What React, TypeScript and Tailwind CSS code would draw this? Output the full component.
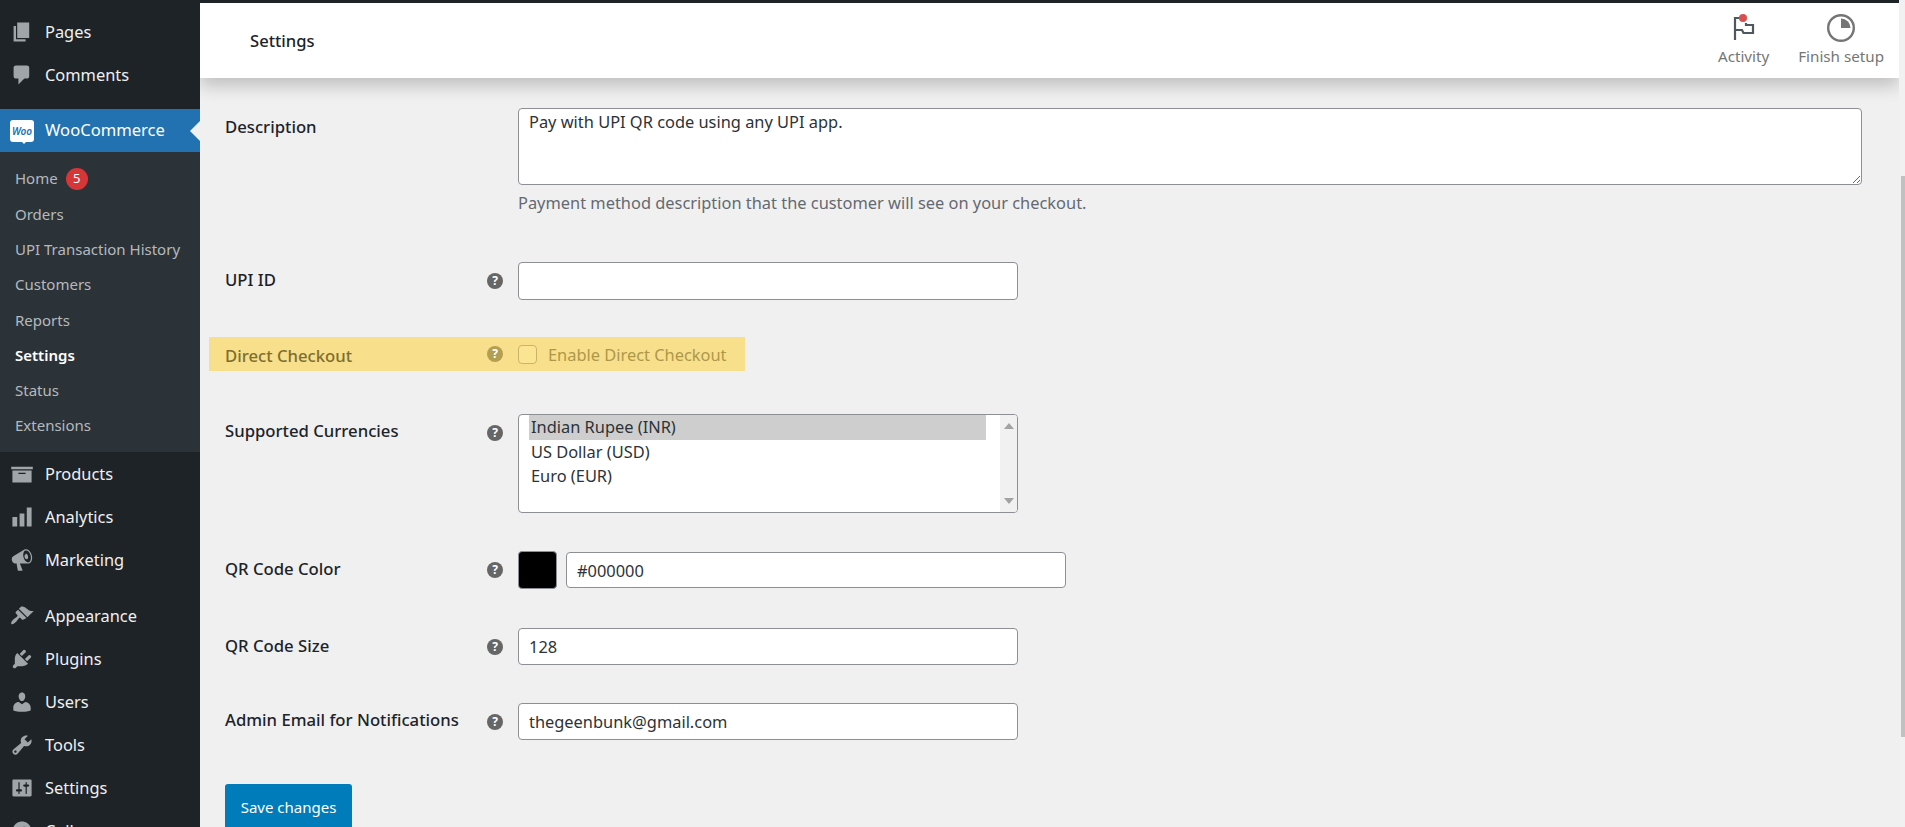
import type { ReactNode } from "react";

const font = { fontFamily: '"Noto Sans", sans-serif' };

const icons: Record<string, ReactNode> = {
    pages: <path d="M6 15V2h10v13H6zm-1 1h8v2H3V5h2v11z" />,
    comments: <path d="M5 2h9q.82 0 1.41.59T16 4v7q0 .82-.59 1.41T14 13h-2l-5 5v-5H5q-.82 0-1.41-.59T3 11V4q0-.82.59-1.41T5 2z" />,
    products: <path d="M19 4v2H1V4h18zM2 7h16v10H2V7zm11 3V9H7v1h6z" />,
    analytics: <path d="M18 18V2h-4v16h4zm-6 0V7H8v11h4zm-6 0v-8H2v8h4z" />,
    marketing: <path d="M18.15 5.94c.46 1.62.38 3.22-.02 4.48-.42 1.28-1.26 2.18-2.3 2.48-.16.06-.26.06-.4.06-.06.02-.12.02-.18.02-.06.02-.14.02-.22.02h-6.8l2.22 5.5c.02.14-.06.26-.14.34-.08.1-.24.16-.34.16H6.95c-.1 0-.26-.06-.34-.16-.08-.08-.16-.2-.14-.34l-1-5.5H4.25l-.02-.02c-.5.06-1.08-.18-1.54-.62s-.88-1.08-1.06-1.88c-.24-.8-.2-1.56-.02-2.2.18-.62.58-1.08 1.06-1.3l.02-.02 9-5.4c.1-.06.18-.1.24-.16.06-.04.14-.08.24-.12.16-.08.28-.12.5-.18 1.04-.3 2.24.1 3.22 1 .98.88 1.8 2.24 2.26 3.86zm-2.58 5.98h-.02c.4-.1.74-.34 1.04-.7.58-.7.86-1.76.86-3.04 0-.64-.1-1.3-.28-1.98-.34-1.36-1.02-2.5-1.78-3.24s-1.68-1.1-2.46-.88c-.82.22-1.4.96-1.7 2-.32 1.04-.28 2.36.06 3.72.38 1.36 1 2.5 1.8 3.24.78.74 1.62 1.1 2.48.88zm-2.54-7.08c.22-.04.42-.02.62.04.38.16.76.48 1.02 1s.42 1.2.42 1.78c0 .3-.04.56-.12.8-.18.48-.44.84-.86.94-.34.1-.8-.06-1.14-.36s-.64-.8-.78-1.38c-.16-.56-.14-1.14 0-1.58.16-.44.42-.76.84-.88z" />,
    appearance: <path d="M14.48 11.06L7.41 3.99l1.5-1.5c.5-.56 2.3-.47 3.51.32 1.21.8 1.43 1.28 2.91 2.1 1.18.64 2.45 1.26 4.45.85zm-.71.71L6.7 4.7 4.93 6.47c-.39.39-.39 1.02 0 1.41l1.06 1.06c.39.39.39 1.03 0 1.42-.6.6-1.43 1.11-2.21 1.69-.35.26-.7.53-1.01.84-1.34 1.34-2.37 2.95-1.58 3.73.79.79 2.39-.24 3.73-1.59.31-.31.58-.66.84-1.01.58-.78 1.09-1.61 1.69-2.21.39-.39 1.02-.39 1.41 0l1.06 1.06c.39.39 1.02.39 1.41 0z" />,
    plugins: <path d="M13.11 4.36L9.87 7.6 8 5.73l3.24-3.24c.35-.34 1.05-.2 1.56.32.52.51.66 1.21.31 1.55zm-8 1.77l.91-1.12 9.01 9.01-1.19.84c-.71.71-2.63 1.16-3.82 1.16H6.14L4.9 17.26c-.59.59-1.54.59-2.12 0-.59-.58-.59-1.53 0-2.12l1.24-1.24v-3.88c0-1.13.4-3.19 1.09-3.89zm7.26 3.97l3.24-3.24c.34-.35 1.04-.21 1.55.31.52.51.66 1.21.31 1.55l-3.24 3.25z" />,
    users: <path d="M10 9.25c-2.27 0-2.73-3.44-2.73-3.44C7 4.02 7.82 2 9.97 2c2.16 0 2.98 2.02 2.71 3.81 0 0-.41 3.44-2.68 3.44zm0 2.57L12.72 10c2.39 0 4.52 2.33 4.52 4.53v2.49s-3.65 1.13-7.24 1.13c-3.65 0-7.24-1.13-7.24-1.13v-2.49c0-2.25 1.94-4.48 4.47-4.48z" />,
    tools: <path d="M16.68 9.77c-1.34 1.34-3.3 1.67-4.95.99l-5.41 6.52c-.99.99-2.59.99-3.58 0s-.99-2.59 0-3.57l6.52-5.42c-.68-1.65-.35-3.61.99-4.95 1.28-1.28 3.12-1.62 4.72-1.06l-2.89 2.89 2.82 2.82 2.86-2.87c.53 1.58.18 3.39-1.08 4.65zM3.81 16.21c.4.39 1.04.39 1.43 0 .4-.4.4-1.04 0-1.43-.39-.4-1.03-.4-1.43 0-.39.39-.39 1.03 0 1.43z" />,
    settings: <path d="M18 16V4c0-.55-.45-1-1-1H3c-.55 0-1 .45-1 1v12c0 .55.45 1 1 1h14c.55 0 1-.45 1-1zM8 11h1c.55 0 1 .45 1 1s-.45 1-1 1H8v1.5c0 .28-.22.5-.5.5s-.5-.22-.5-.5V13H6c-.55 0-1-.45-1-1s.45-1 1-1h1V5.5c0-.28.22-.5.5-.5s.5.22.5.5V11zm5-2h-1c-.55 0-1-.45-1-1s.45-1 1-1h1V5.5c0-.28.22-.5.5-.5s.5.22.5.5V7h1c.55 0 1 .45 1 1s-.45 1-1 1h-1v5.5c0 .28-.22.5-.5.5s-.5-.22-.5-.5V9z" />,
    collapse: <path d="M10 2.16c4.33 0 7.84 3.51 7.84 7.84s-3.51 7.84-7.84 7.84S2.16 14.33 2.16 10 5.71 2.16 10 2.16zm2 11.72V6.12L6.18 9.97z" />,
};

const MenuItem = ({ icon, label }: { icon: string; label: string }) => (
    <div className="flex items-center h-[43px] text-[16.4px] text-[#f0f0f1]">
        <svg viewBox="0 0 20 20" className="w-[24px] h-[24px] ml-[10px] mr-[11px] shrink-0 fill-[#a0a5aa]">{icons[icon]}</svg>
        <span>{label}</span>
    </div>
);

const SubItem = ({ label, active, badge }: { label: string; active?: boolean; badge?: string }) => (
    <div className={`flex items-center h-[35.3px] pl-[15px] text-[15px] ${active ? "text-white font-semibold" : "text-[#b4b9be]"}`}>
        <span>{label}</span>
        {badge && (
            <span className="ml-[8px] flex items-center justify-center w-[22px] h-[22px] rounded-full bg-[#d63638] text-white text-[13px]">{badge}</span>
        )}
    </div>
);

const Sidebar = () => (
    <aside className="w-[200px] h-[827px] shrink-0 bg-[#1d2327] overflow-hidden pt-[10.5px]">
        <MenuItem icon="pages" label="Pages" />
        <MenuItem icon="comments" label="Comments" />
        <div className="relative flex items-center h-[43px] mt-[12.5px] bg-[#2271b1] text-[16.6px] text-white">
            <div className="relative w-[24px] h-[22px] ml-[10px] mr-[11px] rounded-[3px] bg-white flex items-center justify-center">
                <span className="text-[10px] font-semibold italic leading-none text-[#2271b1]">Woo</span>
                <span className="absolute left-[11px] top-[21px] w-0 h-0 border-x-[3px] border-t-[3px] border-x-transparent border-t-white" />
            </div>
            <span>WooCommerce</span>
            <span className="absolute right-0 top-[12px] w-0 h-0 border-y-[10px] border-r-[10px] border-y-transparent border-r-[#f0f0f1]" />
        </div>
        <div className="bg-[#2c3338] pt-[9px] pb-[9px]">
            <SubItem label="Home" badge="5" />
            <SubItem label="Orders" />
            <SubItem label="UPI Transaction History" />
            <SubItem label="Customers" />
            <SubItem label="Reports" />
            <SubItem label="Settings" active />
            <SubItem label="Status" />
            <SubItem label="Extensions" />
        </div>
        <MenuItem icon="products" label="Products" />
        <MenuItem icon="analytics" label="Analytics" />
        <MenuItem icon="marketing" label="Marketing" />
        <div className="h-[13px]" />
        <MenuItem icon="appearance" label="Appearance" />
        <MenuItem icon="plugins" label="Plugins" />
        <MenuItem icon="users" label="Users" />
        <MenuItem icon="tools" label="Tools" />
        <MenuItem icon="settings" label="Settings" />
        <MenuItem icon="collapse" label="Collapse menu" />
    </aside>
);

const Help = ({ className = "bg-[#666666]" }: { className?: string }) => (
    <span className={`flex items-center justify-center w-[16px] h-[16px] rounded-full text-white text-[12px] font-bold leading-none ${className}`}>?</span>
);

const inputClass = "block h-full w-full bg-white border border-[#8c8f94] rounded-[4px] px-[10px] text-[16.4px] text-[#2c3338] outline-none";

const Row = ({ label, labelClass, helpClass, help = true, className, top, children }: { label: string; labelClass: string; helpClass?: string; help?: boolean; className: string; top?: boolean; children: ReactNode }) => (
    <div className={`flex ${top ? "items-start" : "items-center"} ${className}`}>
        <label className={`w-[262px] text-[16.7px] font-medium leading-[22px] text-[#1d2327] ${labelClass}`}>{label}</label>
        <span className={`w-[31px] ${helpClass ?? ""}`}>{help && <Help />}</span>
        {children}
    </div>
);

const TopBar = () => (
    <header className="relative z-10 h-[75px] shrink-0 bg-white flex items-center justify-between pl-[50px] pr-[15px] shadow-[0_8px_16px_rgba(0,0,0,0.2)]">
        <h1 className="mt-[2px] text-[16.6px] font-medium text-[#1d2327]">Settings</h1>
        <div className="flex gap-[29px] text-[15.2px] text-[#757575]">
            <div className="flex flex-col items-center">
                <svg viewBox="0 0 24 30" className="w-[24px] h-[30px] mb-[2px] -ml-[2px]" fill="none">
                    <path d="M4 27V5h6M15 10v2h7v8H12.5l-1.5-3H4" stroke="#50575e" strokeWidth="2.2" />
                    <circle cx="12" cy="5" r="4" fill="#d94f4f" />
                </svg>
                <span>Activity</span>
            </div>
            <div className="flex flex-col items-center">
                <svg viewBox="0 0 30 30" className="w-[30px] h-[30px] mb-[2px]" fill="none">
                    <circle cx="15" cy="15" r="12.8" stroke="#757575" strokeWidth="2.4" />
                    <path d="M15 5.5A9.5 9.5 0 0 1 24.5 15H15z" fill="#757575" />
                </svg>
                <span>Finish setup</span>
            </div>
        </div>
    </header>
);

const Currencies = () => (
    <div className="w-[500px] h-[99px] bg-white border border-[#8c8f94] rounded-[4px] flex text-[16.4px] leading-[24.5px] text-[#2c3338] overflow-hidden">
        <div className="flex-1 pl-[10px]">
            <div className="bg-[#cecece] pl-[2px] w-[457px]">Indian Rupee (INR)</div>
            <div className="pl-[2px]">US Dollar (USD)</div>
            <div className="pl-[2px]">Euro (EUR)</div>
        </div>
        <div className="w-[17px] bg-[#f1f1f1] flex flex-col items-center justify-between py-[8px]">
            <span className="w-0 h-0 border-x-[5px] border-b-[6px] border-x-transparent border-b-[#a3a3a3]" />
            <span className="w-0 h-0 border-x-[5px] border-t-[6px] border-x-transparent border-t-[#a3a3a3]" />
        </div>
    </div>
);

export default function App() {
    return (
        <div className="flex w-[1905px] h-[827px] overflow-hidden bg-[#f0f0f1]" style={font}>
            <Sidebar />
            <main className="flex-1 flex flex-col border-t-[3px] border-[#1d2327] overflow-hidden">
                <TopBar />
                <div className="pl-[25px]">
                    <Row label="Description" labelClass="mt-[8px]" help={false} top className="mt-[30px]">
                        <div className="w-[1344px]">
                            <textarea readOnly className="block w-full h-[77px] bg-white border border-[#8c8f94] rounded-[4px] px-[10px] py-[1px] text-[16.4px] text-[#2c3338] outline-none" value="Pay with UPI QR code using any UPI app." />
                            <p className="mt-[7px] text-[16.4px] leading-[22px] text-[#646970]">Payment method description that the customer will see on your checkout.</p>
                        </div>
                    </Row>
                    <Row label="UPI ID" labelClass="mb-[2px]" className="mt-[48px]">
                        <div className="w-[500px] h-[38px]"><input readOnly className={inputClass} /></div>
                    </Row>
                    <div className="flex items-center mt-[37px] -ml-[16px] pl-[16px] w-[536px] h-[34px] bg-[#f7df8c]">
                        <span className="w-[262px] mt-[4px] text-[16.7px] font-medium text-[#7f6e2c]">Direct Checkout</span>
                        <span className="w-[31px]"><Help className="bg-[#b49f50]" /></span>
                        <span className="w-[19px] h-[19px] rounded-[4px] border border-[#c9b468] bg-[#fbe592]" />
                        <span className="ml-[11px] mt-[3px] text-[16.4px] text-[#ad9849]">Enable Direct Checkout</span>
                    </div>
                    <Row label="Supported Currencies" labelClass="mt-[6px]" helpClass="pt-[11px]" top className="mt-[43px]">
                        <Currencies />
                    </Row>
                    <Row label="QR Code Color" labelClass="mb-[3px]" className="mt-[38px]">
                        <span className="w-[39px] h-[38px] rounded-[4px] bg-black border border-[#8c8f94]" />
                        <div className="w-[500px] h-[36px] ml-[9px]"><input readOnly className={inputClass} value="#000000" /></div>
                    </Row>
                    <Row label="QR Code Size" labelClass="mb-[2px]" className="mt-[39px]">
                        <div className="w-[500px] h-[37px]"><input readOnly className={inputClass} value="128" /></div>
                    </Row>
                    <Row label="Admin Email for Notifications" labelClass="mb-[3px]" className="mt-[38px]">
                        <div className="w-[500px] h-[37px]"><input readOnly className={inputClass} value="thegeenbunk@gmail.com" /></div>
                    </Row>
                    <button className="mt-[44px] w-[127px] h-[46px] rounded-[3px] bg-[#007cba] text-[15px] text-white">Save changes</button>
                </div>
            </main>
            <div className="w-[6px] shrink-0 bg-[#f1f1f1] pl-[2px] pt-[176px]">
                <div className="h-[561px] bg-[#c1c1c1]" />
            </div>
        </div>
    );
}
